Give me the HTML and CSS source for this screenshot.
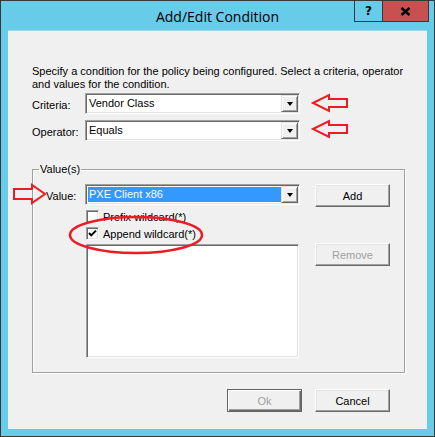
FILE: index.html
```html
<!DOCTYPE html>
<html lang="en">
<head>
    <meta charset="UTF-8">
    <title>Add/Edit Condition</title>
    <link rel="stylesheet" href="styles.css">
</head>
<body>
    <div class="window">
        <div class="titlebar">
            <span></span>
            <span class="title">Add/Edit Condition</span>
            <div class="caption-btns">
                <span class="cbtn help">?</span>
                <span class="cbtn close">
                    <svg width="11" height="9" viewBox="0 0 11 9"><path d="M1.5 1 L9.5 8 M9.5 1 L1.5 8" stroke="#000" stroke-width="2.4" fill="none"/></svg>
                </span>
            </div>
        </div>

        <div class="client">
            <p class="desc">Specify a condition for the policy being configured. Select a criteria, operator<br>and values for the condition.</p>

            <div class="row">
                <label class="lbl">Criteria:</label>
                <div class="combo"><span class="combo-text">Vendor Class</span><span class="drop"></span></div>
            </div>
            <div class="row row-gap">
                <label class="lbl">Operator:</label>
                <div class="combo"><span class="combo-text">Equals</span><span class="drop"></span></div>
            </div>

            <fieldset class="group">
                <legend>Value(s)</legend>
                <div class="value-row">
                    <label class="lbl lbl-value">Value:</label>
                    <div class="combo"><span class="combo-text selected">PXE Client x86</span><span class="drop"></span></div>
                    <button class="btn">Add</button>
                </div>
                <div class="checks">
                    <label class="check"><span class="box"></span>Prefix wildcard(*)</label>
                    <label class="check"><span class="box"><svg width="11" height="11" viewBox="0 0 11 11"><polyline points="2,5 4.2,7.4 9,2.6" stroke="#000" stroke-width="2" fill="none"/></svg></span>Append wildcard(*)</label>
                </div>
                <div class="list-row">
                    <div class="listbox"></div>
                    <button class="btn" disabled>Remove</button>
                </div>
            </fieldset>

            <div class="footer">
                <button class="btn default" disabled>Ok</button>
                <button class="btn">Cancel</button>
            </div>
        </div>

        <!-- red annotations drawn over the dialog -->
        <svg class="marks" width="435" height="437" viewBox="0 0 435 437">
            <g fill="none" stroke="#ed1c24" stroke-width="2" stroke-linejoin="miter">
                <polygon points="313,103 329,95 329,99 347,99 347,107 329,107 329,111"/>
                <polygon points="313,129 329,121 329,125 347,125 347,133 329,133 329,137"/>
                <polygon points="14,189 32,189 32,185 45,194 32,203 32,199 14,199"/>
                <ellipse cx="136" cy="235" rx="66" ry="18" stroke-width="2.5"/>
            </g>
        </svg>
    </div>
</body>
</html>
```

FILE: styles.css
```css
/* Dialog frame */
body {
    margin: 0;
    background: #fff;
}

.window {
    position: relative;
    width: 435px;
    height: 437px;
    box-sizing: border-box;
    border: 1px solid #383838;
    background-color: #67cbea;
    font-family: "Liberation Sans", Arial, sans-serif;
    font-size: 11px;
    color: #000;
}

.titlebar {
    height: 29px;
    display: grid;
    grid-template-columns: 1fr auto 1fr;
}

.title {
    font-family: "Open Sans", "Noto Sans", sans-serif;
    font-size: 14px;
    line-height: 29px;
    padding-top: 1px;
}

.caption-btns {
    justify-self: end;
    align-self: start;
    display: flex;
    height: 20px;
    margin-right: 5px;
    border: 1px solid #383838;
    border-top: none;
}

.cbtn {
    display: flex;
    align-items: center;
    justify-content: center;
}

.help {
    width: 27px;
    border-right: 1px solid #383838;
    font-family: "DejaVu Sans", sans-serif;
    font-weight: bold;
    font-size: 12px;
}

.close {
    width: 45px;
    background-color: #c75050;
}

.client {
    height: 399px;
    margin: 0 7px;
    box-sizing: border-box;
    border-top: 1px solid #a6d3e6;
    background-color: #f0f0f0;
    padding: 34px 0 0 24px;
}

.desc {
    margin: 0;
    line-height: 13px;
}

/* Rows with label + combo */
.row {
    display: flex;
    align-items: center;
    margin-top: 2px;
}

.row-gap {
    margin-top: 6px;
}

.lbl {
    width: 53px;
    padding-top: 2px;
}

.combo {
    width: 215px;
    height: 21px;
    box-sizing: border-box;
    display: flex;
    padding: 1px;
    border: 1px solid;
    border-color: #a0a0a0 #fff #fff #a0a0a0;
    box-shadow: inset 1px 1px 0 #696969, inset -1px -1px 0 #e3e3e3;
    background-color: #fff;
}

.combo-text {
    flex: 1;
    line-height: 17px;
    padding-left: 2px;
}

.combo-text.selected {
    margin: 1px 0 1px 1px;
    padding-left: 1px;
    line-height: 15px;
    background-color: #3399ff;
    color: #fff;
}

.drop {
    width: 17px;
    height: 17px;
    box-sizing: border-box;
    border: 1px solid;
    border-color: #e3e3e3 #696969 #696969 #e3e3e3;
    box-shadow: inset 1px 1px 0 #fff, inset -1px -1px 0 #a0a0a0;
    background-color: #f0f0f0;
    display: flex;
    align-items: center;
    justify-content: center;
}

.drop::after {
    content: "";
    border-left: 3.5px solid transparent;
    border-right: 3.5px solid transparent;
    border-top: 4px solid #000;
    margin-top: 1px;
}

/* Value(s) group */
.group {
    width: 373px;
    box-sizing: border-box;
    margin: 22px 0 0 0;
    padding: 0 0 14px 0;
    border: 1px solid #a0a0a0;
    box-shadow: inset 1px 1px 0 #fff, 1px 1px 0 #fff;
}

.group legend {
    margin-left: 6px;
    padding: 0 1px;
    line-height: 13px;
}

.value-row {
    display: flex;
    align-items: flex-start;
    margin-top: 8px;
    padding-left: 13px;
}

.lbl-value {
    width: 39px;
    padding-top: 6px;
}

.value-row .btn {
    margin-left: 15px;
}

.checks {
    padding-left: 53px;
    margin-top: 1px;
}

.check {
    display: flex;
    align-items: center;
    height: 17px;
    gap: 4px;
}

.box {
    width: 13px;
    height: 13px;
    box-sizing: border-box;
    border: 1px solid;
    border-color: #a0a0a0 #fff #fff #a0a0a0;
    box-shadow: inset 1px 1px 0 #696969, inset -1px -1px 0 #e3e3e3;
    background-color: #fff;
    display: flex;
    align-items: center;
    justify-content: center;
}

.list-row {
    display: flex;
    align-items: flex-start;
    margin-top: 1px;
    padding-left: 53px;
}

.listbox {
    width: 213px;
    height: 114px;
    margin-top: 1px;
    box-sizing: border-box;
    border: 1px solid;
    border-color: #a0a0a0 #fff #fff #a0a0a0;
    box-shadow: inset 1px 1px 0 #696969, inset -1px -1px 0 #e3e3e3;
    background-color: #fff;
}

.list-row .btn {
    margin-left: 16px;
}

/* Buttons */
.btn {
    width: 75px;
    height: 23px;
    box-sizing: border-box;
    padding: 0;
    font-family: "Liberation Sans", Arial, sans-serif;
    font-size: 11px;
    color: #000;
    background-color: #f0f0f0;
    border: 1px solid;
    border-color: #fff #696969 #696969 #fff;
    box-shadow: inset -1px -1px 0 #a0a0a0, inset 1px 1px 0 #e3e3e3;
}

.btn:disabled {
    color: #a0a0a0;
}

.btn.default {
    border-color: #646464;
    box-shadow: inset 1px 1px 0 #fff, inset -1px -1px 0 #696969, inset -2px -2px 0 #a0a0a0;
}

.footer {
    width: 373px;
    box-sizing: border-box;
    display: flex;
    justify-content: flex-end;
    gap: 13px;
    margin-top: 16px;
    padding-right: 15px;
}

.marks {
    position: absolute;
    top: -1px;
    left: -1px;
    pointer-events: none;
}
```
